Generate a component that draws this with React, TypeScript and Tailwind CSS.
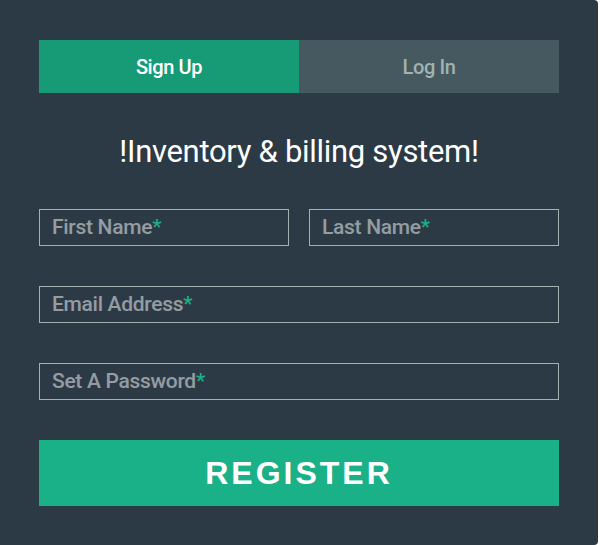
import React from "react";

const font = { fontFamily: "Roboto, 'Noto Sans', sans-serif" };

function Field({ label, className = "" }: { label: string; className?: string }) {
  return (
    <div className={`relative h-[37px] border border-[#a0b3b0] ${className}`}>
      <label className="absolute left-[12px] top-[3px] text-[21px] leading-[28px] font-medium tracking-[-0.3px] text-white/50">
        {label}
        <span className="text-[#1ab188]">*</span>
      </label>
    </div>
  );
}

export default function App() {
  return (
    <div className="w-[600px] h-[545px] bg-white" style={font}>
      <div className="w-[598px] h-[545px] bg-[#2c3a46] rounded-r-[4px] px-[39px] pt-[40px]">
        {/* Tabs */}
        <div className="flex h-[53px]">
          <div className="flex-1 flex items-center justify-center bg-[#179b77] text-white text-[20px] font-medium tracking-[-0.4px]">
            Sign Up
          </div>
          <div className="flex-1 flex items-center justify-center bg-[#465961] text-[#a0b3b0] text-[20px] font-medium tracking-[-0.4px]">
            Log In
          </div>
        </div>

        <h1 className="mt-[39px] text-center text-white text-[31px] font-normal leading-[40px] tracking-[-0.3px]">
          !Inventory &amp; billing system!
        </h1>

        <div className="mt-[37px] flex gap-[20px]">
          <Field label="First Name" className="flex-1" />
          <Field label="Last Name" className="flex-1" />
        </div>

        <Field label="Email Address" className="mt-[40px]" />
        <Field label="Set A Password" className="mt-[40px]" />

        <button className="mt-[40px] w-full h-[66px] bg-[#1ab188] text-white text-[32px] font-bold uppercase tracking-[3px] flex items-center justify-center" style={{ fontFamily: "'Liberation Sans', Arial, sans-serif" }}>
          Register
        </button>
      </div>
    </div>
  );
}
